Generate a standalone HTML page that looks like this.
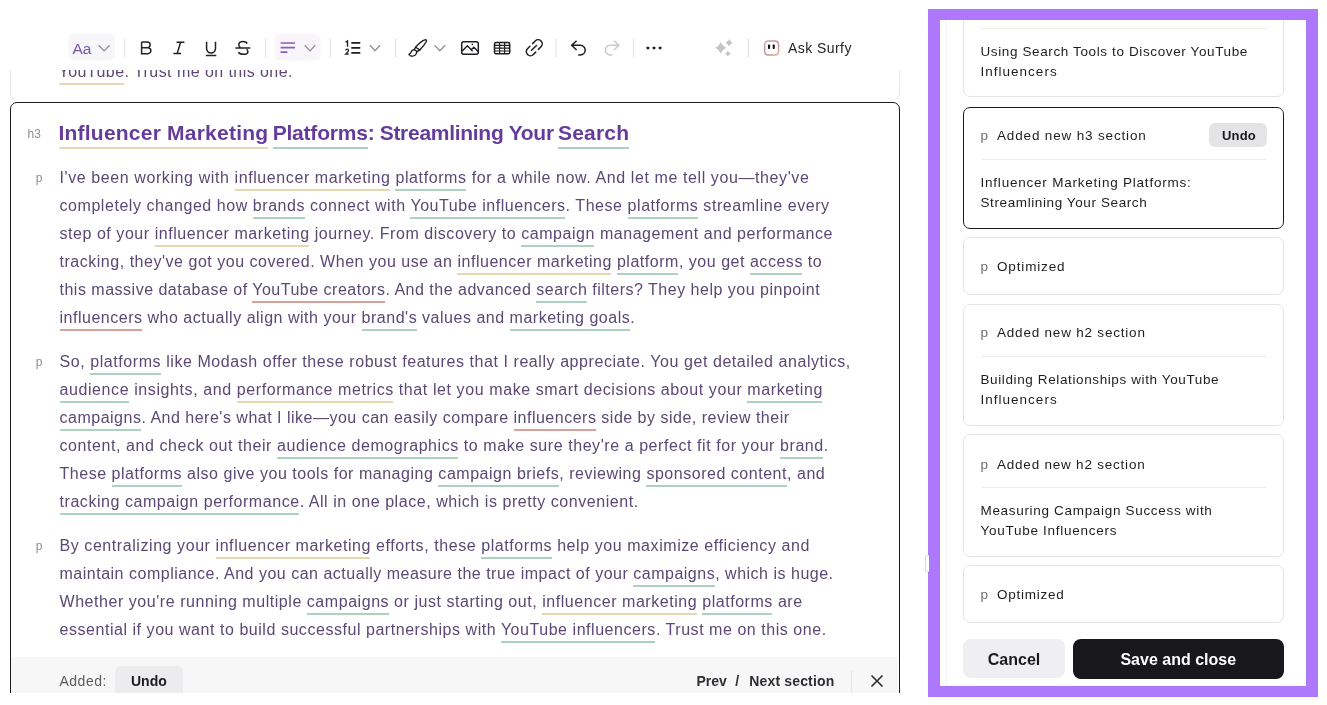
<!DOCTYPE html>
<html><head><meta charset="utf-8">
<style>
*{box-sizing:border-box;margin:0;padding:0}
html,body{width:1327px;height:705px;overflow:hidden;background:#fff}
body{position:relative;font-family:"Liberation Sans",sans-serif;}
.abs{position:absolute}
#left{position:absolute;left:0;top:0;width:910px;height:693px;overflow:hidden;will-change:transform}
.prev{position:absolute;left:10px;top:-120px;width:890px;height:220px;border:1px solid #e6e6e6;border-radius:7px;background:#fff}
.card{position:absolute;left:10px;top:102px;width:890px;height:700px;border:1.4px solid #1c1c1c;border-radius:7px;background:#fff;box-shadow:0 0 0 3.2px #fff}
.ln{position:absolute;left:59.5px;white-space:nowrap;font-size:16px;line-height:28px;color:#5b4874}
.u{border-bottom-width:2px;border-bottom-style:solid;padding-bottom:3.2px}
.tan{border-color:#e3d8b2}
.teal{border-color:#acd1c0}
.red{border-color:#d8a19c}
.tu{padding-bottom:3px}
.lbl{position:absolute;font-size:12px;line-height:20px;color:#8e8e92}
.h3{position:absolute;left:58.5px;top:118.5px;white-space:nowrap;font-size:21px;font-weight:bold;line-height:28px;color:#653c9b}
.hu{border-bottom-width:2px;border-bottom-style:solid;padding-bottom:3px}
#toolbar{position:absolute;left:0;top:0;width:910px;height:69.7px;background:#fff}
.sep{position:absolute;width:1px;background:#e3e3e3}
.bar{position:absolute;left:11px;top:657px;width:886.5px;height:40px;background:#f7f7f8}
/* right */
#panel{position:absolute;left:928px;top:9px;width:390px;height:688px;border:solid #ae78fc;border-width:11.5px 12.5px 11.5px 12px;background:#fff;overflow:hidden}
.rc{position:absolute;left:963px;width:321px;border:1px solid #e4e4e6;border-radius:7px;background:#fff}
.rc.sel{border-color:#1c1c1c}
.rt{position:absolute;left:980.5px;white-space:nowrap;font-size:13.5px;line-height:20px;color:#1e1e22}
.rp{position:absolute;left:980.5px;font-size:13.5px;line-height:20px;color:#6e6e73}
.rsep{position:absolute;left:980.5px;width:286.5px;height:1px;background:#eeeeef}
.btn{position:absolute;border-radius:8px;font-weight:bold;font-size:16px;text-align:center}
</style></head><body>
<div id="left">
  <div class="prev"></div>
  <div class="ln" id="top" style="left:58.5px;top:57.70px;letter-spacing:0.4400px"><span class="u tan tu" style="margin-right:0.4400px">YouTub<span style="letter-spacing:0">e</span></span>. Trust me on this one.</div>
  <div class="card"></div>
  <div class="lbl" style="left:27.5px;top:123.5px">h3</div>
  <div class="h3" id="h1" style="left:58.5px;letter-spacing:0.2200px"><span class="hu tan">Influencer Marketin<span style="letter-spacing:0">g</span></span></div><div class="h3" id="h2" style="left:272.7px;letter-spacing:-0.2100px"><span class="hu teal">Platform<span style="letter-spacing:0">s</span></span><span style="margin-left:-0.21px">:</span></div><div class="h3" id="h3" style="left:379.7px;letter-spacing:-0.2850px">Streamlining Your</div><div class="h3" id="h4" style="left:558px;letter-spacing:0.2000px"><span class="hu teal">Searc<span style="letter-spacing:0">h</span></span></div>
  <div class="lbl" style="top:167.8px;left:35.8px">p</div>
<div class="ln" id="p1_1" style="top:163.90px;letter-spacing:0.5928px">I've been working with <span class="u tan" style="margin-right:0.5928px">influencer marketin<span style="letter-spacing:0">g</span></span> <span class="u teal" style="margin-right:0.5928px">platform<span style="letter-spacing:0">s</span></span> for a while now. And let me tell you—they've</div>
<div class="ln" id="p1_2" style="top:191.90px;letter-spacing:0.5547px">completely changed how <span class="u teal" style="margin-right:0.5547px">brand<span style="letter-spacing:0">s</span></span> connect with <span class="u teal" style="margin-right:0.5547px">YouTube influencer<span style="letter-spacing:0">s</span></span>. These <span class="u teal" style="margin-right:0.5547px">platform<span style="letter-spacing:0">s</span></span> streamline every</div>
<div class="ln" id="p1_3" style="top:219.90px;letter-spacing:0.5463px">step of your <span class="u tan" style="margin-right:0.5463px">influencer marketin<span style="letter-spacing:0">g</span></span> journey. From discovery to <span class="u teal" style="margin-right:0.5463px">campaig<span style="letter-spacing:0">n</span></span> management and performance</div>
<div class="ln" id="p1_4" style="top:247.90px;letter-spacing:0.5224px">tracking, they've got you covered. When you use an <span class="u tan" style="margin-right:0.5224px">influencer marketin<span style="letter-spacing:0">g</span></span> <span class="u teal" style="margin-right:0.5224px">platfor<span style="letter-spacing:0">m</span></span>, you get <span class="u teal" style="margin-right:0.5224px">acces<span style="letter-spacing:0">s</span></span> to</div>
<div class="ln" id="p1_5" style="top:275.90px;letter-spacing:0.5000px">this massive database of <span class="u red" style="margin-right:0.5000px">YouTube creator<span style="letter-spacing:0">s</span></span>. And the advanced <span class="u teal" style="margin-right:0.5000px">searc<span style="letter-spacing:0">h</span></span> filters? They help you pinpoint</div>
<div class="ln" id="p1_6" style="top:303.90px;letter-spacing:0.5133px"><span class="u red" style="margin-right:0.5133px">influencer<span style="letter-spacing:0">s</span></span> who actually align with your <span class="u teal" style="margin-right:0.5133px">brand'<span style="letter-spacing:0">s</span></span> values and <span class="u teal" style="margin-right:0.5133px">marketing goal<span style="letter-spacing:0">s</span></span>.</div>
<div class="lbl" style="top:351.7px;left:35.8px">p</div>
<div class="ln" id="p2_1" style="top:347.80px;letter-spacing:0.5660px">So, <span class="u teal" style="margin-right:0.5660px">platform<span style="letter-spacing:0">s</span></span> like Modash offer these robust features that I really appreciate. You get detailed analytics,</div>
<div class="ln" id="p2_2" style="top:375.80px;letter-spacing:0.5906px"><span class="u teal" style="margin-right:0.5906px">audienc<span style="letter-spacing:0">e</span></span> insights, and <span class="u tan" style="margin-right:0.5906px">performance metric<span style="letter-spacing:0">s</span></span> that let you make smart decisions about your <span class="u teal" style="margin-right:0.5906px">marketin<span style="letter-spacing:0">g</span></span></div>
<div class="ln" id="p2_3" style="top:403.80px;letter-spacing:0.5000px"><span class="u teal" style="margin-right:0.5000px">campaign<span style="letter-spacing:0">s</span></span>. And here's what I like—you can easily compare <span class="u red" style="margin-right:0.5000px">influencer<span style="letter-spacing:0">s</span></span> side by side, review their</div>
<div class="ln" id="p2_4" style="top:431.80px;letter-spacing:0.5680px">content, and check out their <span class="u teal" style="margin-right:0.5680px">audience demographic<span style="letter-spacing:0">s</span></span> to make sure they're a perfect fit for your <span class="u teal" style="margin-right:0.5680px">bran<span style="letter-spacing:0">d</span></span>.</div>
<div class="ln" id="p2_5" style="top:459.80px;letter-spacing:0.5258px">These <span class="u teal" style="margin-right:0.5258px">platform<span style="letter-spacing:0">s</span></span> also give you tools for managing <span class="u teal" style="margin-right:0.5258px">campaign brief<span style="letter-spacing:0">s</span></span>, reviewing <span class="u teal" style="margin-right:0.5258px">sponsored conten<span style="letter-spacing:0">t</span></span>, and</div>
<div class="ln" id="p2_6" style="top:487.80px;letter-spacing:0.5533px"><span class="u teal" style="margin-right:0.5533px">tracking campaign performanc<span style="letter-spacing:0">e</span></span>. All in one place, which is pretty convenient.</div>
<div class="lbl" style="top:535.7px;left:35.8px">p</div>
<div class="ln" id="p3_1" style="top:531.80px;letter-spacing:0.5694px">By centralizing your <span class="u tan" style="margin-right:0.5694px">influencer marketin<span style="letter-spacing:0">g</span></span> efforts, these <span class="u teal" style="margin-right:0.5694px">platform<span style="letter-spacing:0">s</span></span> help you maximize efficiency and</div>
<div class="ln" id="p3_2" style="top:559.80px;letter-spacing:0.5061px">maintain compliance. And you can actually measure the true impact of your <span class="u teal" style="margin-right:0.5061px">campaign<span style="letter-spacing:0">s</span></span>, which is huge.</div>
<div class="ln" id="p3_3" style="top:587.80px;letter-spacing:0.5464px">Whether you're running multiple <span class="u teal" style="margin-right:0.5464px">campaign<span style="letter-spacing:0">s</span></span> or just starting out, <span class="u tan" style="margin-right:0.5464px">influencer marketin<span style="letter-spacing:0">g</span></span> <span class="u teal" style="margin-right:0.5464px">platform<span style="letter-spacing:0">s</span></span> are</div>
<div class="ln" id="p3_4" style="top:615.80px;letter-spacing:0.5426px">essential if you want to build successful partnerships with <span class="u teal" style="margin-right:0.5426px">YouTube influencer<span style="letter-spacing:0">s</span></span>. Trust me on this one.</div>
  <div class="bar"></div>
  <div class="abs" style="left:59.5px;top:671px;font-size:14px;line-height:20px;color:#5c5c60;letter-spacing:0.5px">Added:</div>
  <div class="abs" style="left:115px;top:665.5px;width:68px;height:34px;border-radius:6px;background:#ececef"></div>
  <div class="abs" style="left:131px;top:671px;font-size:14px;line-height:20px;color:#1c1c1f;font-weight:bold">Undo</div>
  <div class="abs" style="left:696.5px;top:671px;font-size:14px;line-height:20px;color:#2f2f33;font-weight:bold;white-space:nowrap">Prev</div><div class="abs" style="left:735.3px;top:671px;font-size:14px;line-height:20px;color:#2f2f33;font-weight:bold;white-space:nowrap">/</div><div class="abs" style="left:749.3px;top:671px;font-size:14px;line-height:20px;color:#2f2f33;font-weight:bold;white-space:nowrap;letter-spacing:0.15px">Next section</div>
  <div class="sep" style="left:850.5px;top:671px;height:22px"></div>
  <svg class="abs" style="left:870px;top:674px" width="14" height="14" viewBox="0 0 14 14"><path d="M1.5 1.5L12.5 12.5M12.5 1.5L1.5 12.5" stroke="#2a2a2e" stroke-width="1.6" fill="none"/></svg>
  <div id="toolbar">
    <svg class="abs" style="left:0;top:0" width="910" height="68" viewBox="0 0 910 68">
<rect x="68.3" y="34" width="46.7" height="26.4" rx="5" fill="#f7f7f9"/>
<text x="72.6" y="53.6" font-family="Liberation Sans" font-size="15.5" fill="#7854aa" letter-spacing="-0.3">Aa</text>
<path d="M98.6 45.3L104.1 50.9L109.6 45.3" stroke="#8e8e93" stroke-width="1.3" fill="none"/>
<rect x="124.3" y="38.5" width="1" height="19" fill="#e2e2e4"/>
<g stroke="#222226" stroke-width="1.5" fill="none">
<path d="M141.6 41.9V53.7H147.9A2.95 2.95 0 0 0 147.9 47.8H141.6M141.6 41.9H147.2A2.95 2.95 0 0 1 147.2 47.8"/>
<path d="M176.6 42.2H184.4M173.4 53.4H181.1M180.6 42.2L177.2 53.4"/>
<path d="M206.6 41.8V48.6A4.45 4.45 0 0 0 215.5 48.6V41.8M205.9 55.4H216.3" />
<path d="M247.3 43.5C246.4 42 244.9 41.6 243.1 41.6C240.5 41.6 238.8 42.9 238.8 44.8C238.8 45.9 239.3 46.8 240.3 47.5M246.6 49.3C247.4 50 247.9 50.8 247.9 51.7C247.9 53.4 246.1 54.3 243.3 54.3C240.9 54.3 239.2 53.5 238.5 52.1M235.4 47.9H250.3"/>
</g>
<rect x="265.0" y="38.5" width="1" height="19" fill="#e2e2e4"/>
<rect x="274.6" y="34" width="46" height="26.4" rx="5" fill="#f8f6fa"/>
<path d="M280.6 43H295M280.6 47.6H295M280.6 52.1H287.4" stroke="#8a5cbd" stroke-width="1.7" fill="none"/>
<path d="M304.7 45.2L310.0 50.9L315.3 45.2" stroke="#8e8e93" stroke-width="1.3" fill="none"/>
<rect x="329.9" y="38.5" width="1" height="19" fill="#e2e2e4"/>
<g stroke="#1e1e22" fill="none">
<path d="M345.6 42.1L347.5 41V46.7" stroke-width="1.4"/>
<path d="M345.6 50.3C345.8 49.5 346.4 49.1 347.1 49.1C347.9 49.1 348.5 49.7 348.5 50.4C348.5 51.3 347.6 52.1 345.6 54.2H348.7" stroke-width="1.3"/>
<path d="M351.3 42.9H360.3M351.3 47.9H360.3M351.3 52.8H360.3" stroke-width="1.8"/>
</g>
<path d="M369.9 45.1L375.04999999999995 50.8L380.2 45.1" stroke="#8e8e93" stroke-width="1.3" fill="none"/>
<rect x="395.1" y="38.5" width="1" height="19" fill="#e2e2e4"/>
<g stroke="#1e1e22" stroke-width="1.35" fill="none" stroke-linejoin="round" stroke-linecap="round">
<path d="M425.6 39.6C426.6 39.9 426.7 40.8 426.3 41.5C425 44 422.5 47.3 419.8 49.9L415.6 47.2C418.2 44 421.8 40.8 425.6 39.6Z"/>
<path d="M414.3 49.5L417.2 51.6"/>
<path d="M415.6 47.2L414.3 49.5M419.8 49.9L417.2 51.6"/>
<path d="M414.3 49.5C412.5 49.8 411.2 51 410.8 52.5C410.5 53.5 409.8 54 408.9 54.4C409.8 55.7 411 56.3 412.4 56.2C414.6 56 416.3 54.2 416.6 52.5"/>
</g>
<path d="M434.5 45.1L439.9 50.8L445.3 45.1" stroke="#8e8e93" stroke-width="1.3" fill="none"/>
<g stroke="#1e1e22" stroke-width="1.5" fill="none">
<rect x="461.7" y="41.8" width="16.6" height="12.4" rx="2"/>
<path d="M462.2 50.9L467.4 45.8L472.6 51.3M471.2 49.8L473.9 47.3L478 51.5" stroke-width="1.4"/>
<rect x="494.5" y="42.6" width="15.2" height="11.2" rx="1.6"/>
<path d="M499.6 42.6V53.8M504.6 42.6V53.8M494.5 45.4H509.7M494.5 48.2H509.7M494.5 51H509.7" stroke-width="1.2"/>
</g>
<circle cx="472.3" cy="44.4" r="0.8" fill="#1e1e22"/>
<path d="M532.6 43.6L535.2 41A4.1 4.1 0 0 1 541 46.8L538.4 49.4M529.9 46.3L527.5 48.7A4.1 4.1 0 0 0 533.3 54.5L535.7 52.1M531.5 50.3L536.5 45.5" stroke="#1e1e22" stroke-width="1.5" fill="none" stroke-linecap="round"/>
<rect x="555.6" y="38.5" width="1" height="19" fill="#e2e2e4"/>
<path d="M576.6 40.7L571.7 45.3L576.6 50M571.7 45.3H580.4A4.8 4.8 0 0 1 580.4 54.9H578.3" stroke="#1e1e22" stroke-width="1.5" fill="none"/>
<path d="M614 40.7L618.9 45.3L614 50M618.9 45.3H610.2A4.8 4.8 0 0 0 610.2 54.9H612.3" stroke="#c9c9cc" stroke-width="1.5" fill="none"/>
<rect x="632.9" y="38.5" width="1" height="19" fill="#e2e2e4"/>
<rect x="646.6" y="46.7" width="2.6" height="2.6" rx="0.6" fill="#1a1a1e"/>
<rect x="652.7" y="46.7" width="2.6" height="2.6" rx="0.6" fill="#1a1a1e"/>
<rect x="658.8" y="46.7" width="2.6" height="2.6" rx="0.6" fill="#1a1a1e"/>
<path d="M720.8 41.9C722.852 45.675999999999995 722.852 45.675999999999995 726.5 47.8C722.852 49.924 722.852 49.924 720.8 53.699999999999996C718.7479999999999 49.924 718.7479999999999 49.924 715.0999999999999 47.8C718.7479999999999 45.675999999999995 718.7479999999999 45.675999999999995 720.8 41.9ZM729.1 39.0C730.3960000000001 41.368 730.3960000000001 41.368 732.7 42.7C730.3960000000001 44.032000000000004 730.3960000000001 44.032000000000004 729.1 46.400000000000006C727.804 44.032000000000004 727.804 44.032000000000004 725.5 42.7C727.804 41.368 727.804 41.368 729.1 39.0ZM727.9 50.4C729.016 52.384 729.016 52.384 731.0 53.5C729.016 54.616 729.016 54.616 727.9 56.6C726.784 54.616 726.784 54.616 724.8 53.5C726.784 52.384 726.784 52.384 727.9 50.4Z" fill="#c4c4c8"/>
<rect x="747.9" y="38.5" width="1" height="19" fill="#e2e2e4"/>
<defs><linearGradient id="sg" x1="0" y1="0" x2="1" y2="1"><stop offset="0" stop-color="#dc9dbd"/><stop offset="0.5" stop-color="#b78b95"/><stop offset="1" stop-color="#ddae8a"/></linearGradient></defs>
<rect x="764.6" y="40.9" width="14" height="14" rx="3.6" stroke="url(#sg)" stroke-width="1.5" fill="#fff"/>
<rect x="768" y="44.5" width="2.1" height="4.5" rx="0.7" fill="#111"/>
<rect x="772.7" y="44.5" width="2.1" height="4.5" rx="0.7" fill="#111"/>
<text x="787.9" y="53.1" font-family="Liberation Sans" font-size="14" fill="#242428" letter-spacing="0.45">Ask Surfy</text>
</svg>
  </div>
</div>
<div id="panel"></div>
<div id="rclip" class="abs" style="left:0;top:0;width:1327px;height:705px;clip-path:inset(20.5px 21.5px 19.3px 940px);will-change:transform">
<div class="abs" style="left:946px;top:0;width:1px;height:705px;background:#f4f4f5"></div>
<div class="rc" style="top:-25.5px;height:122.5px"></div>
<div class="rsep" style="top:28px"></div>
<div class="rt" id="r0" style="left:980.5px;top:41.9px;letter-spacing:0.6198px">Using Search Tools to Discover YouTube</div>
<div class="rt" id="r1" style="left:980.5px;top:61.7px;letter-spacing:1.0100px">Influencers</div>
<div class="rc sel" style="top:106.6px;height:122.5px"></div>
<div class="rp" style="top:126.2px">p</div><div class="rt" id="r2" style="left:997px;top:126.2px;letter-spacing:0.8405px">Added new h3 section</div>
<div class="abs" style="left:1209.2px;top:123.2px;width:57.4px;height:23.4px;border-radius:6px;background:#e4e4e7"></div>
<div class="abs" style="left:1222px;top:125.7px;font-size:13px;line-height:20px;font-weight:bold;color:#1a1a1d;letter-spacing:0.2px">Undo</div>
<div class="rsep" style="top:159px"></div>
<div class="rt" id="r3" style="left:980.5px;top:172.8px;letter-spacing:0.7833px">Influencer Marketing Platforms:</div>
<div class="rt" id="r4" style="left:980.5px;top:192.7px;letter-spacing:0.6022px">Streamlining Your Search</div>
<div class="rc" style="top:237.3px;height:57.9px"></div>
<div class="rp" style="top:257.0px">p</div><div class="rt" id="r5" style="left:997px;top:257.0px;letter-spacing:0.8500px">Optimized</div>
<div class="rc" style="top:303.5px;height:122.3px"></div>
<div class="rp" style="top:323.3px">p</div><div class="rt" id="r6" style="left:997px;top:323.3px;letter-spacing:0.7921px">Added new h2 section</div>
<div class="rsep" style="top:356.2px"></div>
<div class="rt" id="r7" style="left:980.5px;top:370.4px;letter-spacing:0.6144px">Building Relationships with YouTube</div>
<div class="rt" id="r8" style="left:980.5px;top:390.0px;letter-spacing:1.0100px">Influencers</div>
<div class="rc" style="top:434.4px;height:122.8px"></div>
<div class="rp" style="top:454.5px">p</div><div class="rt" id="r9" style="left:997px;top:454.5px;letter-spacing:0.7816px">Added new h2 section</div>
<div class="rsep" style="top:487.2px"></div>
<div class="rt" id="r10" style="left:980.5px;top:500.8px;letter-spacing:0.6830px">Measuring Campaign Success with</div>
<div class="rt" id="r11" style="left:980.5px;top:520.7px;letter-spacing:0.7278px">YouTube Influencers</div>
<div class="rc" style="top:565.4px;height:57.8px"></div>
<div class="rp" style="top:584.7px">p</div><div class="rt" id="r12" style="left:997px;top:584.7px;letter-spacing:0.7500px">Optimized</div>
<div class="btn" style="left:963.3px;top:639.2px;width:101.4px;height:39.3px;background:#efeff1;color:#1b1b1e;line-height:41px">Cancel</div>
<div class="btn" style="left:1072.8px;top:639px;width:210.9px;height:39.5px;background:#18171c;color:#fff;line-height:41px">Save and close</div>
</div>
<div class="abs" style="left:925px;top:555px;width:4px;height:17px;border-radius:2px 0 0 2px;background:#fff;border:1px solid #dcdce0;border-right:none"></div>
</body></html>
